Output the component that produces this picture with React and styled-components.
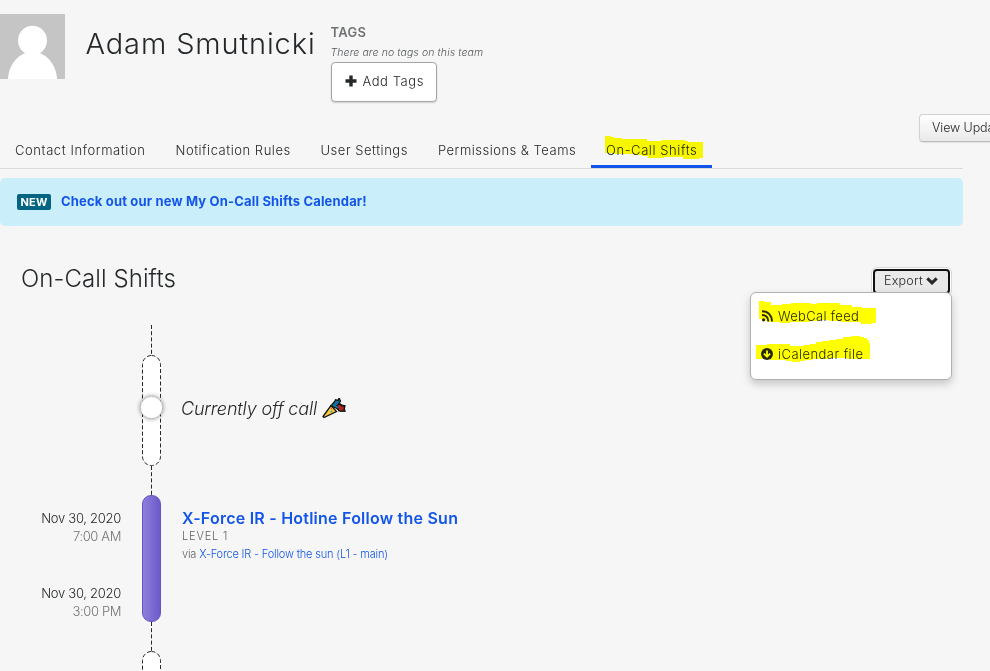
import React from "react";
import styled, { createGlobalStyle, css } from "styled-components";

const GlobalStyle = createGlobalStyle`
  *, *::before, *::after { box-sizing: border-box; }
  body {
    margin: 0;
    background: #f6f6f6;
    color: #25282a;
    font-family: Inter, "Liberation Sans", sans-serif;
    font-weight: 300;
    overflow: hidden;
  }
  button, a { font: inherit; color: inherit; text-decoration: none; }
  h1, h2, h3, p { margin: 0; font-weight: inherit; }
`;

const Page = styled.div`
  width: 990px;
  height: 671px;
  overflow: hidden;
`;

const ProfileHeader = styled.header`
  display: flex;
  height: 100px;
  margin-top: 14px;
`;

const Avatar = styled.svg`
  flex: none;
  display: block;
  width: 65px;
  height: 65px;
  background: #c5c5c5;
`;

const UserName = styled.h1`
  width: 245px;
  margin-left: 20.5px;
  padding-top: 12px;
  font-size: 29px;
  line-height: 36px;
  letter-spacing: 0.88px;
  white-space: nowrap;
`;

const TagPanel = styled.section`
  display: flex;
  flex-direction: column;
  align-items: flex-start;
  padding-top: 10px;
`;

const TagTitle = styled.h2`
  font-size: 13px;
  font-weight: 600;
  line-height: 17px;
  letter-spacing: 0.3px;
  color: #6f7275;
`;

const TagHint = styled.p`
  margin-top: 3px;
  font-size: 10.5px;
  font-style: italic;
  font-weight: 300;
  line-height: 17px;
  letter-spacing: 0.1px;
  color: #55585b;
`;

const AddButton = styled.button`
  display: flex;
  align-items: center;
  gap: 6px;
  width: 106px;
  height: 40px;
  margin-top: 1px;
  padding: 0 0 2px 13px;
  border: 1px solid #a3a5a7;
  border-radius: 4px;
  background: #fff;
  box-shadow: 0 1px 2px rgba(0, 0, 0, 0.16);
  font-size: 13px;
  letter-spacing: 0.55px;
  white-space: nowrap;
`;

const NavBar = styled.nav`
  display: flex;
  align-items: flex-end;
  width: 963px;
  height: 55px;
  border-bottom: 1px solid #d9dadb;
`;

const Tab = styled.a`
  position: relative;
  flex: none;
  width: ${(p) => p.$width}px;
  height: 35px;
  padding-left: 15px;
  font-size: 13px;
  line-height: 34px;
  letter-spacing: ${(p) => p.$tracking || 0}px;
  white-space: nowrap;
  ${(p) => p.$active && css`border-bottom: 3px solid #1355e9;`}
`;

const ViewButton = styled.button`
  flex: none;
  align-self: flex-start;
  width: 150px;
  height: 28px;
  margin: 0 -106px 0 auto;
  padding: 0 12px 2px;
  border: 1px solid #d0d1d2;
  border-bottom-color: #b9babb;
  border-radius: 4px;
  background: linear-gradient(#fff, #e9e9e9);
  box-shadow: 0 1px 1px rgba(0, 0, 0, 0.08);
  font-size: 12.5px;
  letter-spacing: -0.1px;
  text-align: left;
  white-space: nowrap;
`;

const Banner = styled.div`
  display: flex;
  align-items: center;
  gap: 10px;
  width: 963px;
  height: 48px;
  margin-top: 9px;
  padding-left: 17px;
  border-radius: 5px;
  background: #cbeefb;
`;

const NewBadge = styled.span`
  width: 34px;
  height: 16px;
  border-radius: 2px;
  background: #046583;
  color: #fff;
  font-size: 11px;
  font-weight: 700;
  line-height: 17px;
  letter-spacing: 0.1px;
  text-align: center;
`;

const BannerLink = styled.a`
  && { color: #1355e9; }
  && { font-weight: 650; }
  padding-bottom: 2px;
  font-size: 13px;
  line-height: 16px;
  letter-spacing: 0.17px;
`;

const SectionHeader = styled.div`
  display: flex;
  justify-content: space-between;
  align-items: flex-start;
  width: 950px;
  height: 99px;
  padding: 42px 0 0 21px;
`;

const SectionTitle = styled.h2`
  font-size: 24px;
  line-height: 22px;
  letter-spacing: 0.08px;
`;

const ExportArea = styled.div`
  position: relative;
`;

const ExportButton = styled.button`
  display: flex;
  align-items: center;
  gap: 3px;
  width: 77px;
  height: 25px;
  margin-top: 1px;
  padding: 0 0 2px 9px;
  border: 2px solid #101010;
  border-radius: 4px;
  background: #e9e9e9;
  box-shadow: 0 0 0 1px #fff, 0 0 0 2px #d8d9d9;
  font-size: 12.5px;
  letter-spacing: 0.25px;
`;

const ExportMenu = styled.div`
  position: absolute;
  top: 24px;
  right: -2px;
  width: 202px;
  height: 88px;
  padding: 4px 0 0 10px;
  border: 1px solid #b0b1b2;
  border-radius: 6px;
  background: #fff;
  box-shadow: 0 4px 9px rgba(0, 0, 0, 0.2);
`;

const MenuItem = styled.a`
  position: relative;
  display: flex;
  align-items: center;
  gap: 4px;
  height: 38px;
  padding-bottom: 1px;
  font-size: 13px;
  letter-spacing: ${(p) => p.$tracking || 0}px;
  white-space: nowrap;
`;

const Marker = styled.svg`
  position: absolute;
  left: ${(p) => p.$left}px;
  top: ${(p) => p.$top}px;
  fill: #ff0;
  mix-blend-mode: multiply;
  pointer-events: none;
`;

const Icon = styled.svg`
  flex: none;
  display: block;
`;

const TimelineRow = styled.div`
  display: grid;
  grid-template-columns: 121px 19px 1fr;
  column-gap: 21px;
  height: ${(p) => p.$height}px;
`;

const Connector = styled.svg`
  grid-column: 2;
  display: block;
  width: 19px;
  height: 100%;
  stroke: #25282a;
  stroke-dasharray: 4 2.2;
`;

const Capsule = styled.svg`
  grid-column: 2;
  display: block;
  overflow: visible;
`;

const ShiftBar = styled.div`
  border: 1px solid #6653c4;
  border-radius: 9px;
  background: linear-gradient(90deg, #8d80da, #6d59cb);
`;

const OffCall = styled.p`
  display: flex;
  align-items: center;
  gap: 5px;
  margin-left: -1px;
  padding-bottom: 4px;
  font-size: 18px;
  font-style: italic;
  letter-spacing: -0.17px;
  white-space: nowrap;
`;

const Times = styled.div`
  display: flex;
  flex-direction: column;
  justify-content: space-between;
  padding: 14px 0 2px;
  text-align: right;
  font-size: 13px;
  line-height: 18px;
  letter-spacing: -0.28px;
`;

const Hour = styled.div`
  color: #707376;
  letter-spacing: -0.38px;
`;

const Details = styled.div`
  padding: 13px 0 0 0;
  white-space: nowrap;
`;

const ShiftTitle = styled.h3`
  color: #1355e9;
  font-size: 16px;
  font-weight: 600;
  line-height: 20px;
  letter-spacing: 0.23px;
`;

const Level = styled.p`
  color: #606467;
  font-size: 11px;
  line-height: 17px;
  letter-spacing: 0.85px;
`;

const Via = styled.p`
  padding-top: 1px;
  color: #606467;
  font-size: 11px;
  line-height: 17px;
  letter-spacing: -0.17px;
  a { color: #1355e9; }
`;

const tabs = [
  { label: "Contact Information", width: 160.5, tracking: 0.59 },
  { label: "Notification Rules", width: 145, tracking: 0.53 },
  { label: "User Settings", width: 117.5, tracking: 0.53 },
  { label: "Permissions & Teams", width: 168, tracking: 0.49 },
];

function EmptyCapsule({ current }) {
  return (
    <Capsule width="19" height="111" viewBox="0 0 19 111">
      <rect x=".5" y=".5" width="18" height="110" rx="9" fill="#fff" stroke="#25282a" strokeDasharray="4 2.2" />
      {current && (
        <circle cx="9.5" cy="52.5" r="11.2" fill="#fff" stroke="#bbb" strokeWidth="1" filter="drop-shadow(0 0 2px rgba(0,0,0,.4))" />
      )}
    </Capsule>
  );
}

function Link({ height }) {
  return (
    <TimelineRow $height={height}>
      <Connector viewBox={`0 0 19 ${height}`}>
        <path d={`M9.5 0V${height}`} />
      </Connector>
    </TimelineRow>
  );
}

export default function App() {
  return (
    <Page>
      <GlobalStyle />
      <ProfileHeader>
        <Avatar viewBox="0 0 65 65" fill="#fff">
          <ellipse cx="32.5" cy="26.5" rx="14.5" ry="14.7" />
          <path d="M8 65C8.300 54 15 42 27 38.500H38C50 42 56.700 54 57 65Z" />
        </Avatar>
        <UserName>Adam Smutnicki</UserName>
        <TagPanel>
          <TagTitle>TAGS</TagTitle>
          <TagHint>There are no tags on this team</TagHint>
          <AddButton>
            <Icon width="12" height="12" viewBox="0 0 12 12">
              <path d="M6 .5V11.500M.5 6H11.500" stroke="#25282a" strokeWidth="3.400" />
            </Icon>
            Add Tags
          </AddButton>
        </TagPanel>
      </ProfileHeader>

      <NavBar>
        {tabs.map((t) => (
          <Tab key={t.label} $width={t.width} $tracking={t.tracking}>{t.label}</Tab>
        ))}
        <Tab $active $width={121} $tracking={0.57}>
          On-Call Shifts
          <Marker $left={14} $top={3} width="99" height="24" viewBox="0 0 99 24">
            <path d="M0 0H6V1H9V2H17V3H42V5H57V4H80V5H83V6H98V22H94V23H78V21H59V22H43V20H37V19H30V18H7V17H0Z" />
          </Marker>
        </Tab>
        <ViewButton>View Updates</ViewButton>
      </NavBar>

      <Banner>
        <NewBadge>NEW</NewBadge>
        <BannerLink>Check out our new My On-Call Shifts Calendar!</BannerLink>
      </Banner>

      <SectionHeader>
        <SectionTitle>On-Call Shifts</SectionTitle>
        <ExportArea>
          <ExportButton>
            Export
            <Icon width="12" height="8" viewBox="0 0 12 8">
              <path d="M1.300 1.300L6 5.800L10.700 1.300" fill="none" stroke="#25282a" strokeWidth="3" />
            </Icon>
          </ExportButton>
          <ExportMenu>
            <MenuItem $tracking={0.33}>
              <Icon width="13" height="12" viewBox="0 0 13 12">
                <g fill="none" stroke="#25282a" strokeWidth="1.900">
                  <path d="M1 1.300C7 1.300 11 5.300 11 11.500M1 5C4.800 5 7.300 7.500 7.300 11.500" />
                </g>
                <circle cx="2.600" cy="9.800" r="1.600" fill="#25282a" />
              </Icon>
              WebCal feed
              <Marker $left={-2} $top={4} width="118" height="24" viewBox="0 0 118 24">
                <path d="M0 0H5V1H12V4H23V3H32V2H52V3H58V2H81V4H93V6H103V7H117V22H113V23H102V21H82V20H70V19H60V20H51V21H31V22H21V21H10V20H3V18H0Z" />
              </Marker>
            </MenuItem>
            <MenuItem $tracking={0.45}>
              <Icon width="13" height="12" viewBox="0 0 13 12">
                <circle cx="6" cy="6" r="6" fill="#25282a" />
                <path d="M6 2.500V8M2.900 5.700L6 8.800L9.100 5.700" fill="none" stroke="#fff" strokeWidth="1.800" />
              </Icon>
              iCalendar file
              <Marker $left={-5} $top={1} width="115" height="27" viewBox="0 0 115 27">
                <path d="M0 9H11V8H34V10H48V9H54V8H60V6H66V5H73V4H80V3H87V1H95V0H104V1H108V2H111V4H113V7H114V23H91V22H72V23H56V24H49V25H44V26H36V25H30V24H14V23H0Z" />
              </Marker>
            </MenuItem>
          </ExportMenu>
        </ExportArea>
      </SectionHeader>

      <Link height={30} />
      <TimelineRow $height={111}>
        <EmptyCapsule current />
        <OffCall>
          Currently off call
          <Icon width="24" height="22" viewBox="0 0 24 22">
            <path d="M9 8L13 3L13.500 1.800L16 2.500L17 0L18.500 3L17 5.500L20 7L23 8L22 11L23 13L18.500 13L14 10Z" fill="#087b94" stroke="#111" strokeWidth="1.300" />
            <path d="M14.500 7.500L18 6L20 8L22.500 8L22 13H17Z" fill="#a92a1d" stroke="#111" strokeWidth="1.200" />
            <path d="M15.500 3.500L14 6.500M13 7L16 10" stroke="#315da8" strokeWidth="1.500" />
            <path d="M9 7.500L14.500 13.500L2 19.500L1 18.500Z" fill="#ffc83d" stroke="#111" strokeWidth="1.300" />
            <circle cx="9.500" cy="13.500" r=".9" fill="#10aabc" />
            <circle cx="9.500" cy="10.500" r=".7" fill="#e34b35" />
          </Icon>
        </OffCall>
      </TimelineRow>
      <Link height={29} />
      <TimelineRow $height={127}>
        <Times>
          <div>Nov 30, 2020<Hour>7:00 AM</Hour></div>
          <div>Nov 30, 2020<Hour>3:00 PM</Hour></div>
        </Times>
        <ShiftBar />
        <Details>
          <ShiftTitle>X-Force IR - Hotline Follow the Sun</ShiftTitle>
          <Level>LEVEL 1</Level>
          <Via>via <a>X-Force IR - Follow the sun (L1 - main)</a></Via>
        </Details>
      </TimelineRow>
      <Link height={29} />
      <TimelineRow $height={111}>
        <EmptyCapsule />
      </TimelineRow>
    </Page>
  );
}
